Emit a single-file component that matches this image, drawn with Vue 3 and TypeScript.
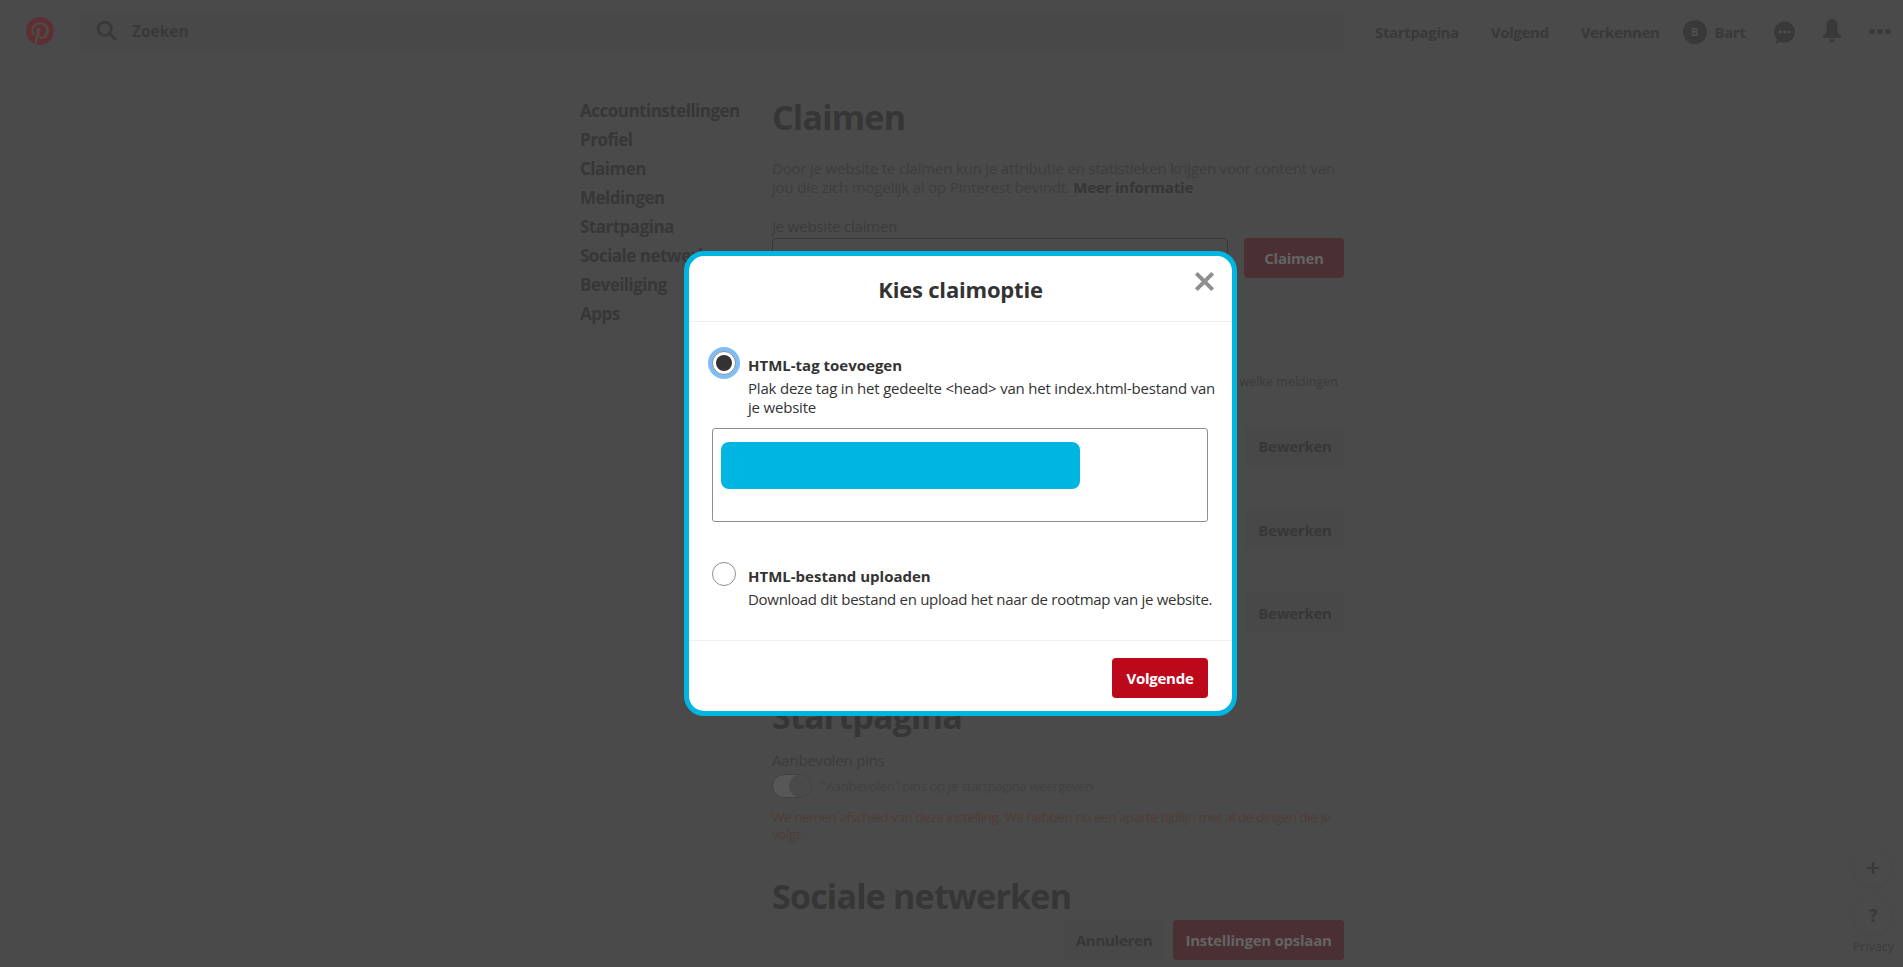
<script setup lang="ts">
const sideItems = ['Accountinstellingen', 'Profiel', 'Claimen', 'Meldingen', 'Startpagina', 'Sociale netwerken', 'Beveiliging', 'Apps']
const noticeRows = ['Op Pinterest', 'Via e-mail', 'Via pushmeldingen']
</script>

<template>
  <div class="page">
    <header class="topbar">
      <svg class="logo" viewBox="0 0 24 24">
        <path d="M0 12c0 5.123 3.211 9.497 7.73 11.218-.11-.937-.227-2.482.025-3.566.217-.932 1.401-5.938 1.401-5.938s-.357-.715-.357-1.774c0-1.66.962-2.9 2.161-2.9 1.02 0 1.512.765 1.512 1.682 0 1.025-.653 2.557-.99 3.978-.281 1.189.597 2.159 1.769 2.159 2.123 0 3.756-2.239 3.756-5.471 0-2.861-2.056-4.86-4.991-4.86-3.398 0-5.393 2.549-5.393 5.184 0 1.027.395 2.127.889 2.726a.36.36 0 0 1 .083.343c-.091.378-.293 1.189-.332 1.355-.053.218-.173.265-.4.159-1.492-.694-2.424-2.875-2.424-4.627 0-3.769 2.737-7.229 7.892-7.229 4.144 0 7.365 2.953 7.365 6.899 0 4.117-2.595 7.431-6.199 7.431-1.211 0-2.348-.63-2.738-1.373 0 0-.599 2.282-.744 2.84-.282 1.084-1.064 2.456-1.549 3.235C9.584 23.815 10.77 24 12 24c6.627 0 12-5.373 12-12S18.627 0 12 0 0 5.373 0 12" />
      </svg>
      <div class="search">
        <svg class="search-icon" viewBox="0 0 24 24">
          <circle cx="10" cy="10" r="7.5" />
          <path d="M16 16l6 6" />
        </svg>
        <span>Zoeken</span>
      </div>
      <nav class="nav">
        <a class="start">Startpagina</a>
        <a class="follow">Volgend</a>
        <a class="explore">Verkennen</a>
        <span class="avatar">B</span>
        <a class="user">Bart</a>
        <svg class="icon chat" viewBox="0 0 24 24">
          <path d="M12 1a11 11 0 0 1 0 22c-1.600 0-3-.3-4.300-.9L3 24.500l1-5.200A11 11 0 0 1 12 1z" />
          <circle class="cut" cx="7.500" cy="12" r="1.500" />
          <circle class="cut" cx="12" cy="12" r="1.500" />
          <circle class="cut" cx="16.500" cy="12" r="1.500" />
        </svg>
        <svg class="icon bell" viewBox="0 0 24 24">
          <path d="M12 0c3.300 0 5.500 2.600 5.500 6v6.500c0 1.800 1.300 2.900 3.500 4.500v2H3v-2c2.200-1.600 3.500-2.700 3.500-4.500V6C6.500 2.600 8.700 0 12 0zM9 20.500h6c-.5 2-1.600 3-3 3s-2.500-1-3-3z" />
        </svg>
        <svg class="icon dots" viewBox="0 0 24 6">
          <circle cx="3.500" cy="3" r="3" />
          <circle cx="12" cy="3" r="3" />
          <circle cx="20.500" cy="3" r="3" />
        </svg>
      </nav>
    </header>

    <main class="layout">
      <aside class="side">
        <a v-for="item in sideItems" :key="item">{{ item }}</a>
      </aside>

      <section class="content">
        <h1 class="first">Claimen</h1>
        <p class="intro">
          Door je website te claimen kun je attributie en statistieken krijgen voor content van
          jou die zich mogelijk al op Pinterest bevindt. <b>Meer informatie</b>
        </p>
        <label class="label">Je website claimen</label>
        <div class="claim-row">
          <div class="input"></div>
          <button class="btn red claim">Claimen</button>
        </div>

        <h1 class="notice-title">Meldingen</h1>
        <p class="notice-hint">Bepaal voor elk van de kanalen welke meldingen</p>
        <div v-for="row in noticeRows" :key="row" class="notice-row">
          <span>{{ row }}</span>
          <button class="btn grey">Bewerken</button>
        </div>

        <h1 class="home-title">Startpagina</h1>
        <label class="label">Aanbevolen pins</label>
        <div class="toggle-row">
          <span class="toggle"><i></i></span>
          <span>"Aanbevolen" pins op je startpagina weergeven</span>
        </div>
        <p class="warn">We nemen afscheid van deze instelling. We hebben nu een aparte tijdlijn met al de dingen die je volgt.</p>

        <h1 class="social-title">Sociale netwerken</h1>
      </section>
    </main>

    <div class="save-bar">
      <button class="btn grey cancel">Annuleren</button>
      <button class="btn red save">Instellingen opslaan</button>
    </div>

    <div class="helpers">
      <span class="round">
        <svg viewBox="0 0 14 14"><path d="M7 1v12M1 7h12" /></svg>
      </span>
      <span class="round question">?</span>
      <span class="privacy">Privacy</span>
    </div>

    <div class="modal">
      <div class="modal-head">
        <h2>Kies claimoptie</h2>
        <svg class="close" viewBox="0 0 18 18"><path d="M2 2l14 14M16 2L2 16" /></svg>
      </div>
      <div class="modal-body">
        <div class="option">
          <span class="radio checked"><i></i></span>
          <div class="option-text">
            <h3>HTML-tag toevoegen</h3>
            <p class="wide">Plak deze tag in het gedeelte &lt;head&gt; van het index.html-bestand van je website</p>
          </div>
        </div>
        <div class="tag-box"><div class="redacted"></div></div>
        <div class="option second">
          <span class="radio"></span>
          <div class="option-text">
            <h3>HTML-bestand uploaden</h3>
            <p>Download dit bestand en upload het naar de rootmap van je website.</p>
          </div>
        </div>
      </div>
      <div class="modal-foot">
        <button class="btn next">Volgende</button>
      </div>
    </div>
  </div>
</template>

<style>
html,
body {
  margin: 0;
  background: #4a4a4a;
}
</style>

<style scoped>
.page {
  position: relative;
  width: 1903px;
  height: 967px;
  overflow: hidden;
  background: #4a4a4a;
  color: #363636;
  font-family: "Open Sans", "Noto Sans", sans-serif;
}

.topbar {
  display: flex;
  align-items: center;
  height: 61px;
  padding: 0 0 0 26px;
}
.logo {
  width: 28px;
  height: 28px;
  fill: #5e2f32;
  flex: none;
  border-radius: 50%;
  background: #4f4848;
}
.search {
  display: flex;
  align-items: center;
  width: 1263px;
  height: 38px;
  margin: 0 0 0 26px;
  padding-left: 16px;
  box-sizing: border-box;
  background: #484848;
  border-radius: 4px;
  font-size: 15.500px;
  font-weight: 700;
  color: #393939;
}
.search-icon {
  width: 21px;
  height: 21px;
  margin-right: 15px;
  fill: none;
  stroke: #393939;
  stroke-width: 3.200;
  stroke-linecap: round;
}
.nav {
  display: flex;
  align-items: center;
  padding-top: 2px;
  font-size: 15px;
  font-weight: 700;
  color: #393939;
  letter-spacing: -0.350px;
}
.start {
  margin-left: 32px;
}
.follow {
  margin-left: 32px;
}
.explore {
  margin-left: 32px;
}
.avatar {
  display: flex;
  align-items: center;
  justify-content: center;
  width: 24px;
  height: 24px;
  margin-left: 23px;
  border-radius: 50%;
  background: #393939;
  color: #4f4f4f;
  font-size: 11px;
}
.user {
  margin-left: 8px;
}
.icon {
  flex: none;
  fill: #393939;
}
.chat {
  width: 23px;
  height: 24px;
  margin-left: 27px;
}
.chat .cut {
  fill: #4f4f4f;
}
.bell {
  width: 24px;
  height: 26px;
  margin: -2px 0 0 24px;
}
.dots {
  width: 22px;
  height: 7px;
  margin: -1px 0 0 25px;
}

.layout {
  display: flex;
  padding: 34px 0 0 580px;
}
.side {
  display: flex;
  flex-direction: column;
  width: 192px;
  flex: none;
  margin-top: 1px;
  font-size: 17px;
  font-weight: 700;
  line-height: 29px;
  color: #373737;
  letter-spacing: -0.500px;
  white-space: nowrap;
}
.content {
  width: 572px;
  font-size: 15px;
  color: #3b3b3b;
}
h1 {
  margin: 0;
  font-size: 34px;
  line-height: 46px;
  font-weight: 700;
  color: #363636;
  letter-spacing: -0.800px;
}
.first {
  margin-top: -1px;
}
.intro {
  margin: 19px 0 0;
  line-height: 18.500px;
  letter-spacing: -0.190px;
  color: #3d3d3d;
}
.intro b {
  color: #363636;
}
.label {
  display: block;
  margin-top: 20px;
  line-height: 20px;
  letter-spacing: -0.200px;
}
.claim-row {
  display: flex;
  gap: 16px;
  margin-top: 2px;
}
.input {
  width: 456px;
  height: 40px;
  box-sizing: border-box;
  border: 1px solid #373737;
  border-radius: 4px;
}
.btn {
  height: 40px;
  border: 0;
  border-radius: 4px;
  font-family: inherit;
  font-size: 15px;
  font-weight: 700;
  letter-spacing: -0.250px;
  padding: 0;
}
.red {
  background: #4a3033;
  color: #646464;
}
.grey {
  background: #484848;
  color: #373737;
}
.claim {
  width: 100px;
}
.notice-title {
  margin-top: 40px;
}
.notice-hint {
  margin: 9px 0 0;
  padding-right: 6px;
  text-align: right;
  font-size: 12.500px;
  line-height: 18px;
}
.notice-row {
  display: flex;
  align-items: center;
  justify-content: space-between;
  height: 83.500px;
  box-sizing: border-box;
}
.notice-row + .notice-row {
  border-top: 1px solid #484848;
}
.notice-hint + .notice-row {
  margin-top: 13px;
}
.notice-row .btn {
  width: 98px;
}
.home-title {
  margin-top: 38px;
}
.home-title + .label {
  margin-top: 11px;
}
.toggle-row {
  display: flex;
  align-items: center;
  gap: 9px;
  margin-top: 4px;
  font-size: 13px;
  letter-spacing: -0.300px;
  color: #414141;
}
.toggle {
  display: flex;
  justify-content: flex-end;
  width: 40px;
  height: 24px;
  box-sizing: border-box;
  border-radius: 12px;
  background: #575757;
  border: 1px solid #414141;
}
.toggle i {
  width: 22px;
  height: 22px;
  border-radius: 50%;
  background: #4a4a4a;
}
.warn {
  margin: 11px 0 0;
  font-size: 13.500px;
  line-height: 17px;
  letter-spacing: -0.450px;
  color: #4e3d36;
}
.social-title {
  margin-top: 30px;
}

.save-bar {
  position: absolute;
  top: 920px;
  right: 559px;
  display: flex;
  gap: 8px;
}
.cancel {
  width: 102px;
}
.save {
  width: 171px;
}

.helpers {
  position: absolute;
  right: 6px;
  bottom: 11px;
  display: flex;
  flex-direction: column;
  align-items: center;
  color: #393939;
}
.round {
  display: flex;
  align-items: center;
  justify-content: center;
  width: 38px;
  height: 38px;
  margin-bottom: 9px;
  border-radius: 50%;
  box-shadow: 0 1px 2px #474747;
}
.round svg {
  width: 14px;
  height: 14px;
  fill: none;
  stroke: #393939;
  stroke-width: 2.200;
}
.question {
  font-size: 17px;
  font-weight: 700;
}
.privacy {
  margin-top: -6px;
  padding: 1px 3px;
  font-size: 12.500px;
  line-height: 17px;
  color: #3c3c3c;
}

.modal {
  position: absolute;
  top: 251px;
  left: 684px;
  display: flex;
  flex-direction: column;
  width: 553px;
  height: 465px;
  box-sizing: border-box;
  border: 5px solid #00b5e2;
  border-radius: 20px;
  background: #fff;
  color: #333;
}
.modal-head {
  position: relative;
  height: 66px;
  flex: none;
  box-sizing: border-box;
  border-bottom: 1px solid #efefef;
  text-align: center;
}
.modal-head h2 {
  margin: 0;
  padding-top: 18px;
  font-size: 22px;
  line-height: 30px;
  font-weight: 700;
  letter-spacing: -0.200px;
}
.close {
  position: absolute;
  top: 15px;
  right: 17px;
  width: 21px;
  height: 21px;
  fill: none;
  stroke: #8e8e8e;
  stroke-width: 3.400;
}
.modal-body {
  flex: 1;
  padding: 29px 24px 0 23px;
}
.option {
  display: flex;
}
.option-text {
  margin-left: 12px;
  padding-top: 4px;
}
.option-text h3 {
  margin: 0;
  font-size: 15px;
  line-height: 20px;
  font-weight: 700;
}
.option-text p {
  margin: 4px -14px 0 0;
  font-size: 15px;
  line-height: 19px;
  letter-spacing: -0.300px;
}
.option-text p.wide {
  letter-spacing: -0.200px;
}
.radio {
  display: flex;
  align-items: center;
  justify-content: center;
  width: 24px;
  height: 24px;
  flex: none;
  box-sizing: border-box;
  border: 1px solid #8e8e8e;
  border-radius: 50%;
  background: #fff;
}
.radio.checked {
  box-shadow: 0 0 0 4px #7fbdf8;
}
.radio i {
  width: 16px;
  height: 16px;
  border-radius: 50%;
  background: #333;
}
.tag-box {
  height: 94px;
  margin-top: 11px;
  padding: 13px 8px;
  box-sizing: border-box;
  border: 1px solid #8e8e8e;
  border-radius: 3px;
}
.redacted {
  width: 359px;
  height: 47px;
  border-radius: 8px;
  background: #00b5e2;
}
.second {
  margin-top: 40px;
}
.modal-foot {
  display: flex;
  justify-content: flex-end;
  height: 71px;
  flex: none;
  box-sizing: border-box;
  padding: 17px 24px 0;
  border-top: 1px solid #efefef;
}
.next {
  width: 96px;
  background: #bd081c;
  color: #fff;
}
</style>
